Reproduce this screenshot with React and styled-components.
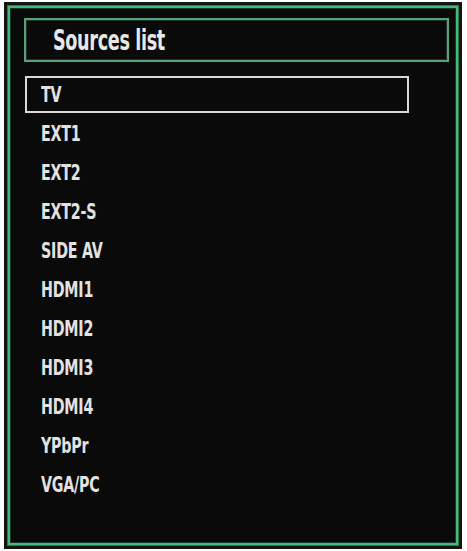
import styled, { createGlobalStyle } from 'styled-components';

const GlobalStyle = createGlobalStyle`
  html, body {
    margin: 0;
    padding: 0;
    background: #ffffff;
  }
`;

const sources = [
  'TV',
  'EXT1',
  'EXT2',
  'EXT2-S',
  'SIDE AV',
  'HDMI1',
  'HDMI2',
  'HDMI3',
  'HDMI4',
  'YPbPr',
  'VGA/PC',
];

export default function App() {
  const selected = 0;
  return (
    <>
      <GlobalStyle />
      <Frame>
        <Header>
          <Title>Sources list</Title>
        </Header>
        <List>
          {sources.map((name, i) => (
            <Item key={name} $active={i === selected}>
              <Label>{name}</Label>
            </Item>
          ))}
        </List>
      </Frame>
    </>
  );
}

const Frame = styled.div`
  box-sizing: border-box;
  width: 458px;
  height: 547px;
  margin: 2px 0 0 4px;
  padding: 13px 10px 0 17px;
  background: #0a0a0a;
  border: 3px solid #141414;
  box-shadow: inset 0 0 0 1px #2a7a4c, inset 0 0 0 3px #45b877, inset 0 0 0 4px #1a3a28;
  font-family: 'DejaVu Sans Condensed', 'DejaVu Sans', sans-serif;
  font-weight: bold;
  color: #e2e2e2;
`;

const Header = styled.div`
  box-sizing: border-box;
  height: 44px;
  border: 2px solid #5aa07a;
  box-shadow: inset 0 0 0 1px #1e3328;
  display: flex;
  align-items: center;
  padding-left: 27px;
`;

const Title = styled.span`
  display: inline-block;
  font-size: 28px;
  letter-spacing: -0.5px;
  transform: scaleX(0.7);
  transform-origin: left center;
  color: #e8e8e8;
`;

const List = styled.ul`
  list-style: none;
  margin: 14px 0 0 1px;
  padding: 0;
  width: 384px;
`;

const Item = styled.li`
  box-sizing: border-box;
  height: 37px;
  margin-bottom: 2px;
  display: flex;
  align-items: center;
  padding-left: 14px;
  border: 2px solid ${(p) => (p.$active ? '#d8d8d8' : 'transparent')};
`;

const Label = styled.span`
  display: inline-block;
  font-size: 22px;
  letter-spacing: -0.3px;
  transform: scaleX(0.72);
  transform-origin: left center;
`;
